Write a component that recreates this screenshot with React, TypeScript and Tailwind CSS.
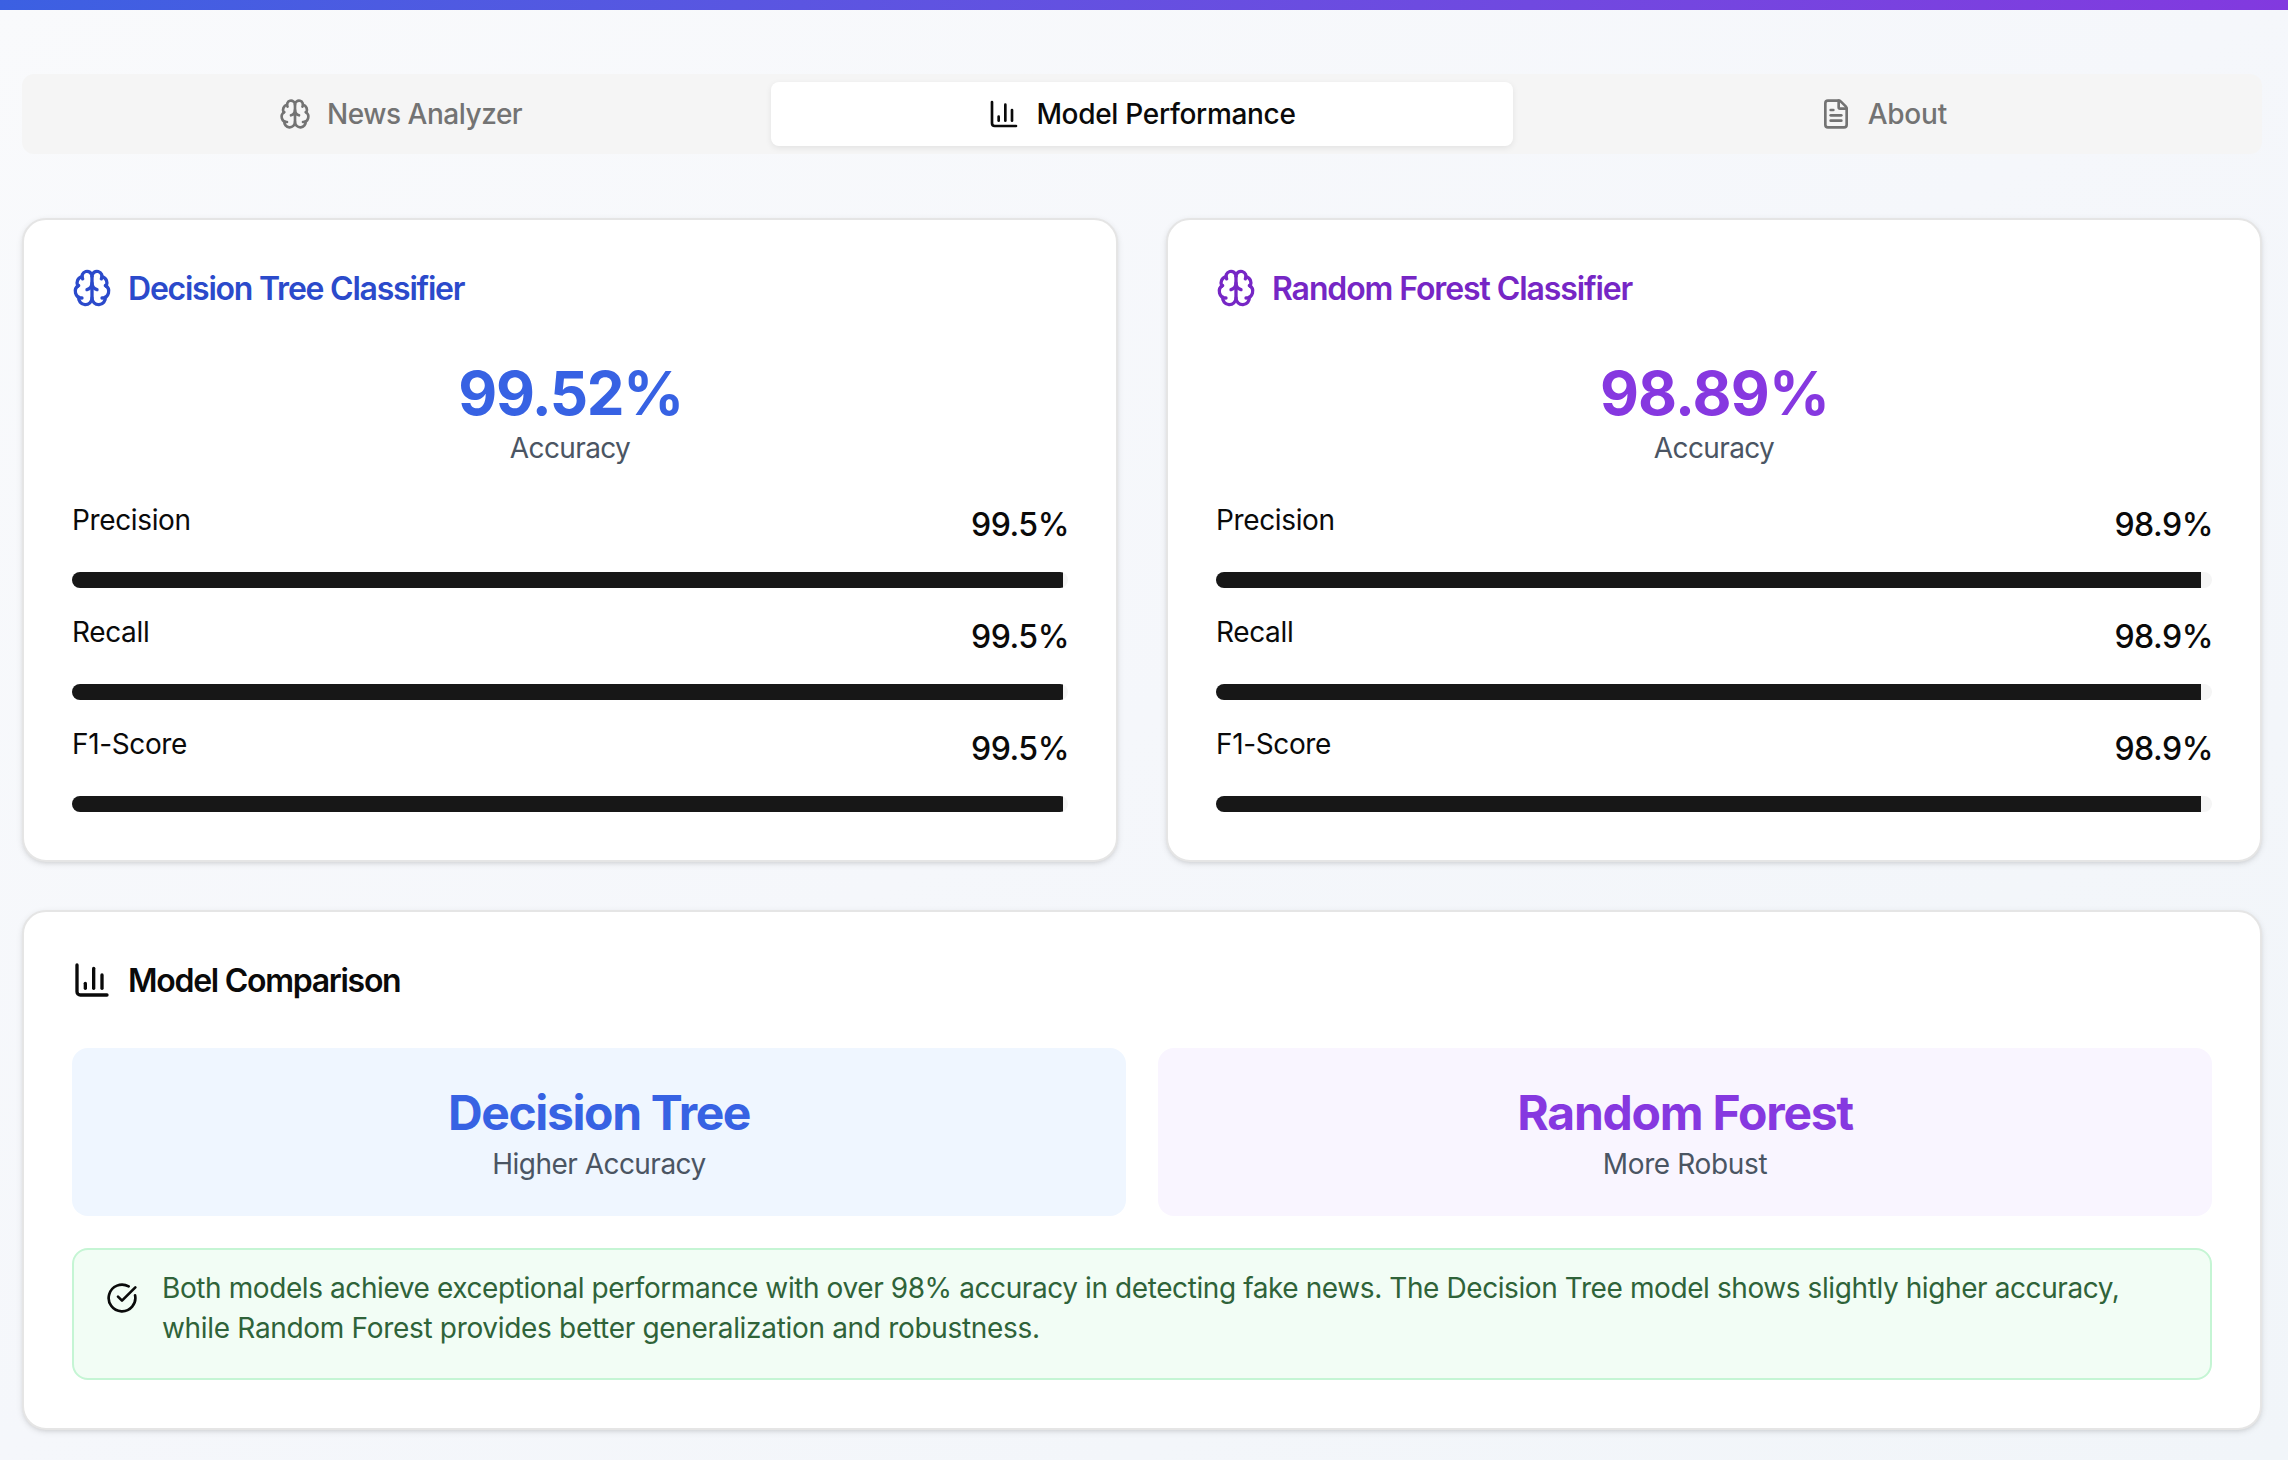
import type { ReactNode } from "react";
import { Brain, ChartColumn, CircleCheckBig, FileText } from "lucide-react";

type Model = {
  name: string;
  accuracy: string;
  titleStyle: string;
  accuracyStyle: string;
  value: number;
};

const models: Model[] = [
  {
    name: "Decision Tree Classifier",
    accuracy: "99.52%",
    titleStyle: "text-[#2b4acb] tracking-[-0.0385em]",
    accuracyStyle: "text-[#3762e3] tracking-[-0.024em]",
    value: 99.5,
  },
  {
    name: "Random Forest Classifier",
    accuracy: "98.89%",
    titleStyle: "text-[#7626c5] tracking-[-0.0345em]",
    accuracyStyle: "text-[#8638e0] tracking-[-0.014em]",
    value: 98.9,
  },
];

const metrics = ["Precision", "Recall", "F1-Score"];

function Card({ children }: { children: ReactNode }) {
  return (
    <section className="rounded-[24px] border-2 border-[#e5e5e5] bg-white p-12 shadow-[0_2px_6px_rgba(0,0,0,0.1),0_2px_4px_-2px_rgba(0,0,0,0.1)]">
      {children}
    </section>
  );
}

function Tab({ icon, label, active = false }: { icon: ReactNode; label: ReactNode; active?: boolean }) {
  return (
    <button
      className={
        active
          ? "flex h-16 items-center justify-center gap-4 rounded-[8px] bg-white text-[28px] leading-10 font-medium text-[#0a0a0a] shadow-[0_2px_6px_rgba(0,0,0,0.08)]"
          : "flex h-16 items-center justify-center gap-4 rounded-[8px] text-[28px] leading-10 font-medium text-[#737373]"
      }
    >
      {icon}
      {label}
    </button>
  );
}

function Metric({ label, value }: { label: string; value: number }) {
  return (
    <div className="flex flex-col gap-6">
      <div className="flex h-12 items-start justify-between">
        <span className="text-[28px] leading-10 tracking-[-0.013em]">{label}</span>
        <span className="-mr-px text-[32px] leading-[50px] font-medium tracking-[-0.015em]">{value.toFixed(1)}%</span>
      </div>
      <div className="h-4 overflow-hidden rounded-full bg-[#f5f5f5]">
        <div className="h-full bg-[#171717]" style={{ width: `${value}%` }} />
      </div>
    </div>
  );
}

function ModelCard({ model }: { model: Model }) {
  return (
    <Card>
      <h2 className={`flex h-10 items-center gap-4 text-[32px] leading-8 font-semibold ${model.titleStyle}`}>
        <Brain className="size-10" />
        <span className="pt-0.5">{model.name}</span>
      </h2>
      <div className="mt-12 text-center">
        <div className={`h-[72px] pl-px text-[60px] leading-[74px] font-bold ${model.accuracyStyle}`}>{model.accuracy}</div>
        <div className="text-[28px] leading-10 tracking-[-0.022em] text-[#4b5563]">Accuracy</div>
      </div>
      <div className="mt-8 flex flex-col gap-6">
        {metrics.map((metric) => (
          <Metric key={metric} label={metric} value={model.value} />
        ))}
      </div>
    </Card>
  );
}

export default function App() {
  return (
    <div className="min-h-[1460px] bg-linear-to-br from-[#f9fafc] via-[#f5f7fb] to-[#f1f5f9] font-['Inter',sans-serif] text-[#0a0a0a]">
      <div className="h-[10px] bg-linear-to-r from-[#3b60e2] to-[#8239df]" />
      <main className="ml-[22px] w-[2240px] pt-16">
        <nav className="grid h-20 grid-cols-3 rounded-[12px] bg-[#f5f5f5] p-2">
          <Tab icon={<Brain className="size-8" />} label={<span className="tracking-[-0.017em]">News Analyzer</span>} />
          <Tab icon={<ChartColumn className="size-8" />} label={<span className="tracking-[-0.011em]">Model Performance</span>} active />
          <Tab icon={<FileText className="size-8" />} label={<span className="tracking-[-0.008em]">About</span>} />
        </nav>

        <div className="mt-16 grid grid-cols-2 gap-12">
          {models.map((model) => (
            <ModelCard key={model.name} model={model} />
          ))}
        </div>

        <div className="mt-12">
          <Card>
            <h2 className="flex h-10 items-center gap-4 text-[32px] leading-8 font-semibold tracking-[-0.04em]">
              <ChartColumn className="size-10" />
              <span className="pt-0.5">Model Comparison</span>
            </h2>
            <div className="mt-12 grid grid-cols-2 gap-8">
              <div className="rounded-[16px] bg-[#eff6ff] p-8 text-center">
                <div className="h-16 text-[48px] leading-[66px] font-bold tracking-[-0.0285em] text-[#3762e3]">Decision Tree</div>
                <div className="text-[28px] leading-10 tracking-[-0.019em] text-[#4b5563]">Higher Accuracy</div>
              </div>
              <div className="rounded-[16px] bg-[#f9f5ff] p-8 text-center">
                <div className="h-16 text-[48px] leading-[66px] font-bold tracking-[-0.0255em] text-[#8638e0]">Random Forest</div>
                <div className="text-[28px] leading-10 tracking-[-0.013em] text-[#4b5563]">More Robust</div>
              </div>
            </div>
            <div className="mt-8 flex h-[132px] gap-6 rounded-[16px] border-2 border-[#c5f5d4] bg-[#f2fdf5] px-8">
              <CircleCheckBig className="mt-8 size-8 shrink-0" />
              <p className="pt-[18px] text-[28px] leading-10 text-[#2f6339]">
                <span className="tracking-[-0.0146em]">
                  Both models achieve exceptional performance with over 98% accuracy in detecting fake news. The Decision Tree model shows slightly higher accuracy,
                </span>
                <br />
                <span className="tracking-[-0.0113em]">while Random Forest provides better generalization and robustness.</span>
              </p>
            </div>
          </Card>
        </div>
      </main>
    </div>
  );
}
